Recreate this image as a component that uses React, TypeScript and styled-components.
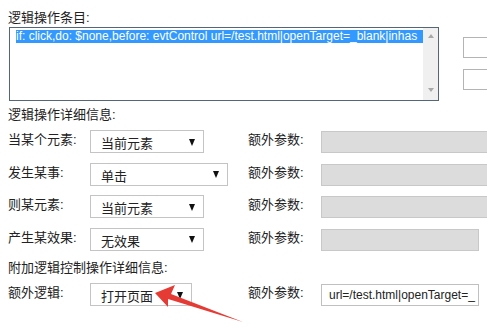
import * as React from 'react'
import styled, { createGlobalStyle } from 'styled-components'

const GlobalStyle = createGlobalStyle`
  html, body {
    margin: 0;
    padding: 0;
    background: #fff;
    overflow: hidden;
  }
  body {
    width: 487px;
    height: 327px;
    font-family: "Liberation Sans", "Noto Sans CJK SC", sans-serif;
    font-size: 13px;
    color: #222;
  }
`

const Page = styled('div')`
  position: relative;
  width: 487px;
  height: 327px;
  padding: 9px 0 0 8px;
  box-sizing: border-box;
  overflow: hidden;
`

const TopSection = styled('div')`
  display: flex;
  align-items: flex-start;
`

const EntryColumn = styled('div')`
  display: flex;
  flex-direction: column;
  flex-shrink: 0;
  width: 431px;
`

const Heading = styled('div')<{ height?: number }>`
  line-height: ${(p) => p.height ?? 18}px;
  height: ${(p) => p.height ?? 18}px;
  white-space: nowrap;
`

const EntryBox = styled('div')`
  display: flex;
  margin-left: 1px;
  height: 74px;
  border: 1px solid #556677;
  box-sizing: border-box;
  background: #fff;
`

const EntryLines = styled('div')`
  flex: 1;
  overflow: hidden;
  padding: 2px 0 0 6px;
`

const SelectedLine = styled('div')`
  background: #3399ff;
  color: #fff;
  font-size: 12px;
  line-height: 13px;
  white-space: nowrap;
  overflow: hidden;
`

const Scrollbar = styled('div')`
  width: 15px;
  background: #f0f0f0;
  display: flex;
  flex-direction: column;
  justify-content: space-between;
  align-items: center;
  padding: 6px 0 8px;
`

const ScrollArrow = styled('div')<{ down?: boolean }>`
  width: 0;
  height: 0;
  border-left: 3.5px solid transparent;
  border-right: 3.5px solid transparent;
  ${(p) => (p.down ? 'border-top: 4px solid #a8a8a8;' : 'border-bottom: 4px solid #a8a8a8;')}
`

const SideInputs = styled('div')`
  display: flex;
  flex-direction: column;
  flex-shrink: 0;
  gap: 11px;
  margin: 28px 0 0 24px;
`

const SideInput = styled('div')`
  width: 40px;
  height: 21px;
  border: 1px solid #b4b4b4;
  box-sizing: border-box;
  background: #fff;
`

const DetailHeading = styled(Heading)`
  margin: 4px 0 0;
`

const Form = styled('div')`
  display: grid;
  grid-template-columns: 82px 158px 73px 1fr;
  row-gap: 9.67px;
  margin-top: 5px;
  align-items: start;
`

const FullRow = styled('div')`
  grid-column: 1 / -1;
  line-height: 13px;
  height: 13px;
  white-space: nowrap;
`

const Label = styled('div')`
  line-height: 20px;
  white-space: nowrap;
`

const Select = styled('div')<{ width: number }>`
  width: ${(p) => p.width}px;
  height: 23px;
  border: 1px solid #c4c4c4;
  box-sizing: border-box;
  background: #fff;
  display: flex;
  align-items: center;
  justify-content: space-between;
  padding: 2px 8px 0 10px;
  font-size: 13px;
`

const Caret = styled('span')`
  width: 0;
  height: 0;
  border-left: 3.5px solid transparent;
  border-right: 3.5px solid transparent;
  border-top: 7px solid #111;
  margin-top: -1px;
`

const ParamInput = styled('div')<{ width: number; disabled?: boolean }>`
  width: ${(p) => p.width}px;
  height: 22px;
  margin-top: 1px;
  border: 1px solid ${(p) => (p.disabled ? '#c8c8c8' : '#c0c0c0')};
  background: ${(p) => (p.disabled ? '#dcdcdc' : '#fff')};
  box-sizing: border-box;
  padding: 0 0 0 7px;
  font-size: 12px;
  line-height: 20px;
  white-space: nowrap;
  overflow: hidden;
`

const Pointer = styled('svg')`
  position: absolute;
  left: 0;
  top: 0;
  pointer-events: none;
`

interface IRowProps {
  label: string
  value: string
  width: number
  inputWidth: number
  param?: string
}

function FormRow (props: IRowProps) {
  return (
    <>
      <Label>{props.label}</Label>
      <Select width={props.width}>
        <span>{props.value}</span>
        <Caret />
      </Select>
      <Label>额外参数:</Label>
      <ParamInput width={props.inputWidth} disabled={!props.param}>{props.param}</ParamInput>
    </>
  )
}

export default function App () {
  return (
    <Page>
      <GlobalStyle />
      <TopSection>
        <EntryColumn>
          <Heading>逻辑操作条目:</Heading>
          <EntryBox>
            <EntryLines>
              <SelectedLine>if: click,do: $none,before: evtControl url=/test.html|openTarget=_blank|inhas</SelectedLine>
            </EntryLines>
            <Scrollbar>
              <ScrollArrow />
              <ScrollArrow down />
            </Scrollbar>
          </EntryBox>
        </EntryColumn>
        <SideInputs>
          <SideInput />
          <SideInput />
        </SideInputs>
      </TopSection>
      <DetailHeading height={20}>逻辑操作详细信息:</DetailHeading>
      <Form>
        <FormRow label='当某个元素:' value='当前元素' width={114} inputWidth={200} />
        <FormRow label='发生某事:' value='单击' width={138} inputWidth={200} />
        <FormRow label='则某元素:' value='当前元素' width={114} inputWidth={200} />
        <FormRow label='产生某效果:' value='无效果' width={114} inputWidth={158} />
        <FullRow>附加逻辑控制操作详细信息:</FullRow>
        <FormRow label='额外逻辑:' value='打开页面' width={102} inputWidth={158} param='url=/test.html|openTarget=_' />
      </Form>
      <Pointer width='487' height='327' viewBox='0 0 487 327'>
        <polygon points='155,293 175,285 171,294 243,322 168,299 168,307' fill='#e63b34' />
      </Pointer>
    </Page>
  )
}
